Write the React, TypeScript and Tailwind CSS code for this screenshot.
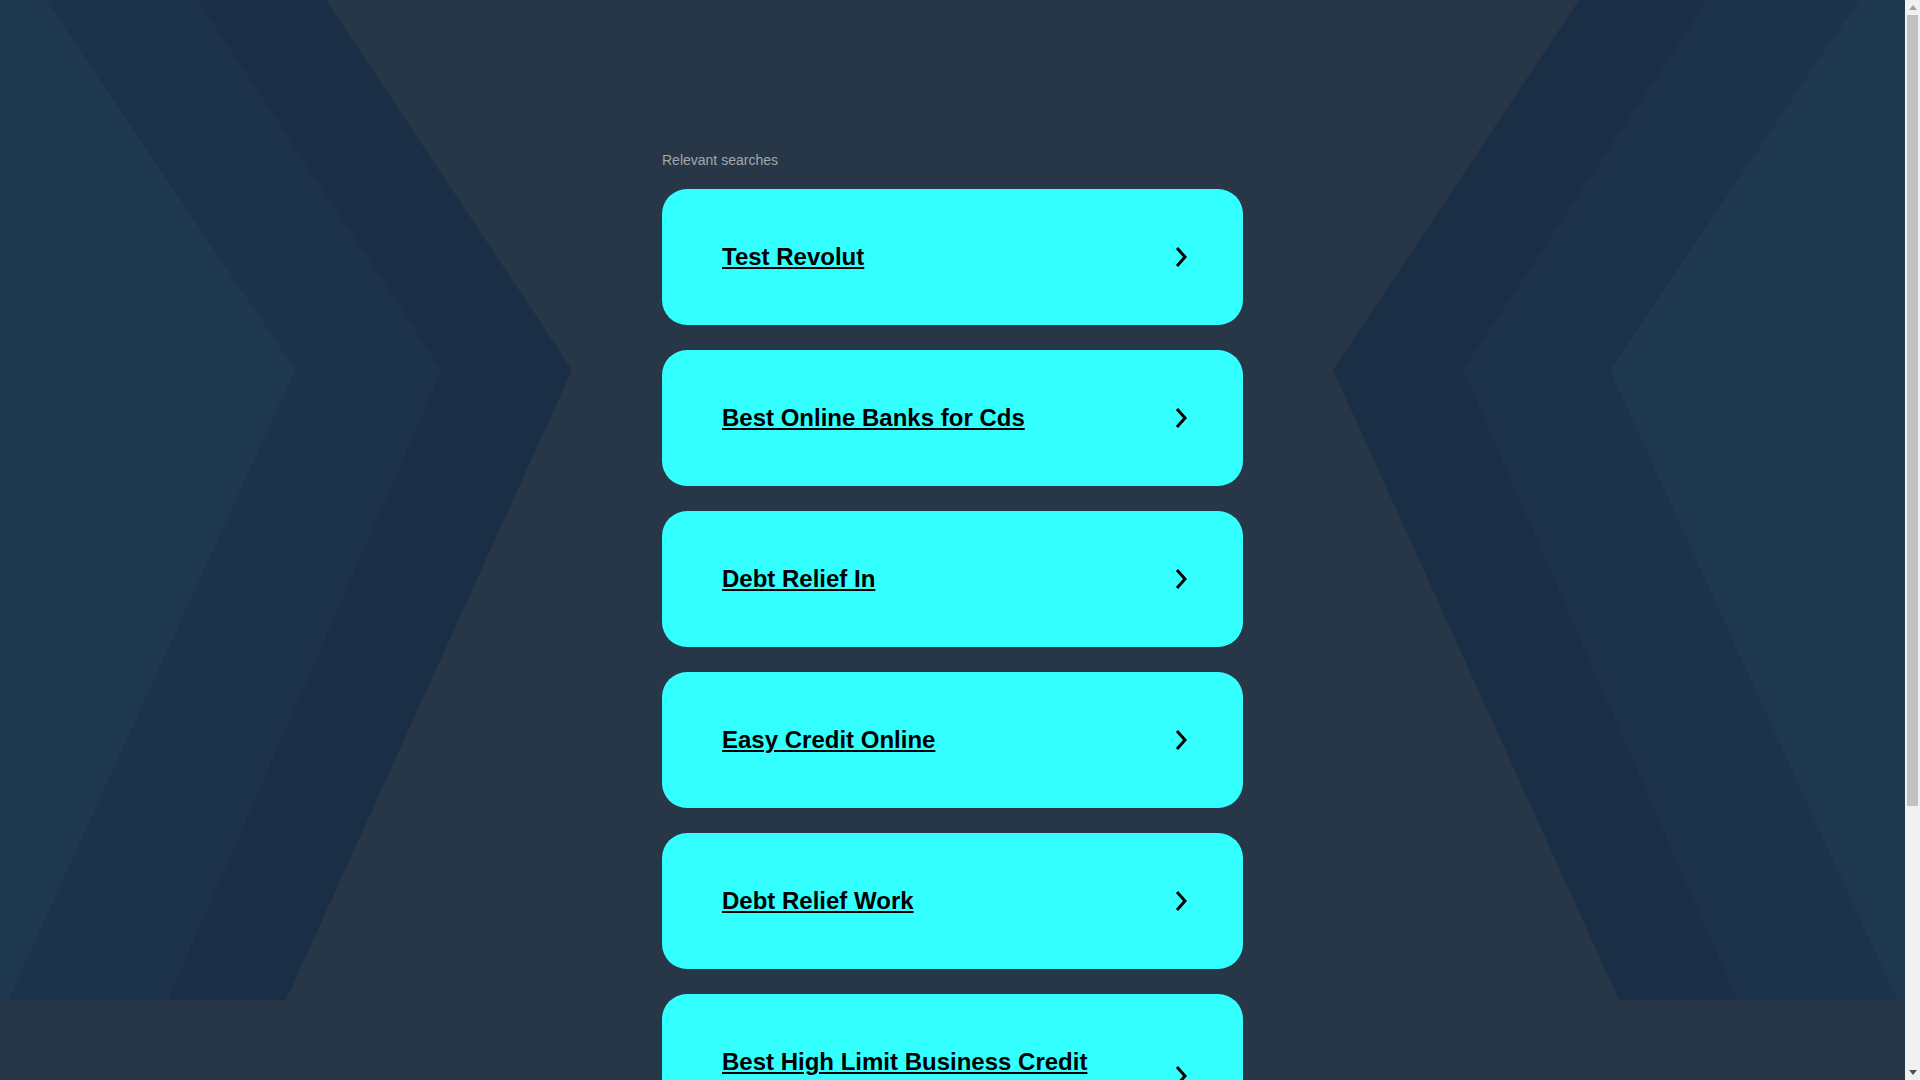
import React from 'react';

const searches = [
  'Test Revolut',
  'Best Online Banks for Cds',
  'Debt Relief In',
  'Easy Credit Online',
  'Debt Relief Work',
  'Best High Limit Business Credit Cards',
];

// Background chevron bands, drawn once and mirrored for the right side
function Bands({ flip }: { flip?: boolean }) {
  return (
    <svg
      width="600"
      height="1000"
      viewBox="0 0 600 1000"
      className={flip ? 'absolute top-0 right-0 -scale-x-100' : 'absolute top-0 left-0'}
    >
      <polygon points="0,0 326,0 572,370 286,1000 0,1000" fill="#1a2f45" />
      <polygon points="0,0 198,0 442,370 168,1000 0,1000" fill="#1d334b" />
      <polygon points="0,0 46,0 295,370 8,1000 0,1000" fill="#1f3950" />
    </svg>
  );
}

function Chevron() {
  return (
    <svg width="14" height="22" viewBox="0 0 14 22" className="shrink-0">
      <polyline points="3,2 11,11 3,20" fill="none" stroke="#000" strokeWidth="3" />
    </svg>
  );
}

// Classic page scrollbar as seen in the screenshot
function Scrollbar() {
  return (
    <div className="flex h-screen w-[15px] shrink-0 flex-col bg-[#f1f1f1]">
      <div className="flex h-[15px] items-center justify-center">
        <svg width="8" height="5" viewBox="0 0 8 5">
          <polygon points="0,5 4,0 8,5" fill="#a3a3a3" />
        </svg>
      </div>
      <div className="flex-1 px-[2px]">
        <div className="h-[791px] bg-[#c1c1c1]" />
      </div>
      <div className="flex h-[15px] items-center justify-center">
        <svg width="8" height="5" viewBox="0 0 8 5">
          <polygon points="0,0 8,0 4,5" fill="#505050" />
        </svg>
      </div>
    </div>
  );
}

export default function App() {
  return (
    <div className="flex h-screen bg-[#273747]">
      <div className="flex-1 overflow-y-auto [scrollbar-width:none]">
        <div className="relative min-h-[1434px] font-['Liberation_Sans',Arial,sans-serif]">
          {/* Background */}
          <div className="absolute inset-x-0 top-0 h-[1000px] overflow-hidden">
            <Bands />
            <Bands flip />
          </div>

          {/* Content */}
          <div className="relative mx-auto w-[581px] pt-[151px] pb-[120px]">
            <p className="mb-[20px] text-[14px] leading-[18px] text-[#a3a8ad]">Relevant searches</p>
            <div className="flex flex-col gap-[25px]">
              {searches.map((s) => (
                <a
                  key={s}
                  href="#"
                  className="flex items-center rounded-[25px] bg-[#33ffff] py-[54px] pl-[60px] pr-[55px]"
                >
                  <span className="flex-1 pr-[30px] text-[24px] font-bold leading-[28px] text-black underline">
                    {s}
                  </span>
                  <Chevron />
                </a>
              ))}
            </div>
          </div>
        </div>
      </div>
      <Scrollbar />
    </div>
  );
}
